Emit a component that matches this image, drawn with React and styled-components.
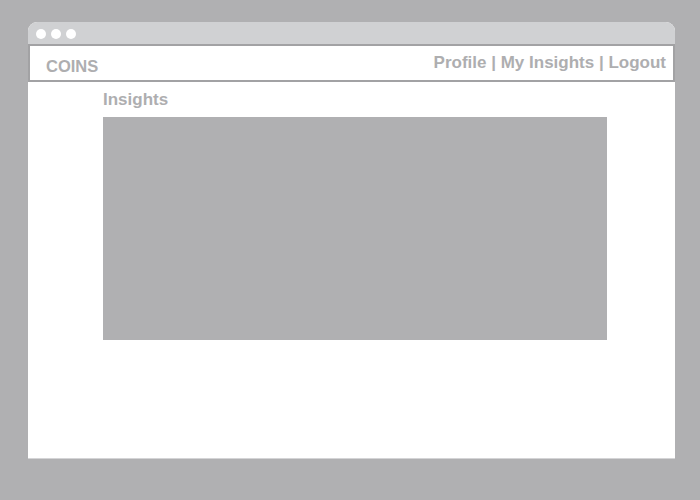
import React from "react";
import styled, { createGlobalStyle } from "styled-components";

const GlobalStyle = createGlobalStyle`
  html, body {
    margin: 0;
    padding: 0;
    background: #b0b0b2;
    font-family: "Liberation Sans", Arial, sans-serif;
  }
`;

const Page = styled.div`
  width: 700px;
  height: 500px;
  padding: 22px 0 0 28px;
  box-sizing: border-box;
`;

const Window = styled.div`
  width: 647px;
  height: 437px;
  background: #fff;
  border-radius: 9px 9px 0 0;
  overflow: hidden;
  display: flex;
  flex-direction: column;
  border-bottom: 1px solid #d4d4d6;
  box-sizing: border-box;
`;

const TitleBar = styled.div`
  height: 22px;
  background: #d0d1d3;
  display: flex;
  align-items: center;
  gap: 5px;
  padding-left: 8px;
  padding-top: 1px;
  box-sizing: border-box;
`;

const Dot = styled.span`
  width: 10px;
  height: 10px;
  border-radius: 50%;
  background: #fff;
`;

const Nav = styled.nav`
  height: 38px;
  border: 2px solid #a2a2a4;
  box-sizing: border-box;
  display: flex;
  justify-content: space-between;
  align-items: flex-start;
  padding: 0 7px 0 16px;
`;

const Brand = styled.div`
  font-size: 16.5px;
  font-weight: bold;
  line-height: 20px;
  color: #aeaeb0;
  margin-top: 10px;
`;

const Links = styled.div`
  font-size: 17px;
  font-weight: bold;
  line-height: 20px;
  color: #aeaeb0;
  margin-top: 7px;
  white-space: pre;
`;

const Content = styled.main`
  padding: 8px 0 0 75px;
`;

const Heading = styled.h2`
  margin: 0 0 7px;
  font-size: 17px;
  font-weight: bold;
  line-height: 20px;
  color: #aeaeb0;
`;

const Chart = styled.div`
  width: 504px;
  height: 223px;
  background: #b0b0b2;
`;

export default function App() {
  return (
    <>
      <GlobalStyle />
      <Page>
        <Window>
          <TitleBar>
            <Dot />
            <Dot />
            <Dot />
          </TitleBar>
          <Nav>
            <Brand>COINS</Brand>
            <Links>Profile | My Insights | Logout</Links>
          </Nav>
          <Content>
            <Heading>Insights</Heading>
            <Chart />
          </Content>
        </Window>
      </Page>
    </>
  );
}
